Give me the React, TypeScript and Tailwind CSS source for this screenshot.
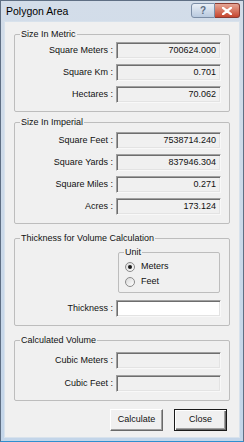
import type { ReactNode } from 'react';

const font = { fontFamily: '"Liberation Sans", Arial, sans-serif' };

function Field({ label, value, white }: { label: string; value?: string; white?: boolean }) {
  return (
    <div className="flex items-center h-[17px]">
      <span className="w-[101px] text-right pr-[3px]">{label}</span>
      <div
        className={
          (white ? 'bg-white' : 'bg-[#f0f0f0]') +
          ' w-[105px] h-[17px] border border-t-[#a0a0a0] border-l-[#a0a0a0] border-r-[#f8f8f8] border-b-[#f8f8f8] shadow-[inset_1px_1px_0_#6e6e6e,inset_-1px_-1px_0_#e3e3e3] flex items-center justify-end pr-[4px]'
        }
      >
        {value}
      </div>
    </div>
  );
}

function Group({ title, className, children }: { title: string; className?: string; children: ReactNode }) {
  return (
    <fieldset className={'border border-[#bdbdbd] rounded-[2px] mx-[9px] px-0 ' + (className ?? '')}>
      <legend className="ml-[5px] px-[1px] leading-[13px]">{title}</legend>
      {children}
    </fieldset>
  );
}

function Radio({ label, checked }: { label: string; checked?: boolean }) {
  return (
    <div className="flex items-center h-[15px] pl-[6px]">
      <div className="w-[10px] h-[10px] rounded-full border border-[#8a8a8a] bg-gradient-to-br from-[#d8d8d8] to-white flex items-center justify-center">
        {checked && <div className="w-[4px] h-[4px] rounded-full bg-[#1a1a1a]" />}
      </div>
      <span className="ml-[6px]">{label}</span>
    </div>
  );
}

function Btn({ label, isDefault }: { label: string; isDefault?: boolean }) {
  return (
    <button
      className={
        'w-[53px] h-[22px] bg-[#f0f0f0] flex items-center justify-center ' +
        (isDefault
          ? 'border border-[#1a1a1a] shadow-[inset_1px_1px_0_#ffffff,inset_-1px_-1px_0_#696969,inset_-2px_-2px_0_#a0a0a0]'
          : 'border border-t-white border-l-white border-r-[#696969] border-b-[#696969] shadow-[inset_-1px_-1px_0_#a0a0a0]')
      }
    >
      {label}
    </button>
  );
}

export default function App() {
  return (
    <div style={font} className="w-[244px] h-[442px] text-[9px] text-[#111]">
      <div className="w-full h-full flex flex-col border border-[#5f6f84] bg-gradient-to-b from-[#d3dde9] to-[#c3d5e9] border-b-[#2f8fd0]">
        <div className="h-[20px] flex items-center pl-[5px] pr-[3px] shrink-0">
          <span className="text-[10.5px] text-black flex-1 pt-[1px]">Polygon Area</span>
          <div className="flex items-start self-start mt-[2px]">
            <div className="w-[24px] h-[15px] rounded-l-[3px] border border-[#7c8ea6] bg-gradient-to-b from-[#e9eff6] to-[#b9cadf] flex items-center justify-center text-[10px] font-bold text-[#5d6d82]">
              ?
            </div>
            <div className="w-[25px] h-[15px] rounded-r-[3px] border border-[#8a3b32] border-l-0 bg-gradient-to-b from-[#e5a595] to-[#c5452f] flex items-center justify-center">
              <svg width="10" height="8" viewBox="0 0 10 8">
                <path d="M1 0.8 L9 7.2 M9 0.8 L1 7.2" stroke="#ffffff" strokeWidth="2.2" strokeLinecap="round" />
              </svg>
            </div>
          </div>
        </div>
        <div className="flex-1 mx-[3px] mb-[3px] bg-[#f0f0f0] border border-[#d8e2ec] flex flex-col pt-[6px]">
          <Group title="Size In Metric" className="pt-[1px] pb-[8px]">
            <div className="flex flex-col gap-[5px]">
              <Field label="Square Meters :" value="700624.000" />
              <Field label="Square Km :" value="0.701" />
              <Field label="Hectares :" value="70.062" />
            </div>
          </Group>
          <Group title="Size In Imperial" className="mt-[4px] pt-[3px] pb-[8px]">
            <div className="flex flex-col gap-[5px]">
              <Field label="Square Feet :" value="7538714.240" />
              <Field label="Square Yards :" value="837946.304" />
              <Field label="Square Miles :" value="0.271" />
              <Field label="Acres :" value="173.124" />
            </div>
          </Group>
          <Group title="Thickness for Volume Calculation" className="mt-[8px] pt-[1px] pb-[8px]">
            <fieldset className="border border-[#bdbdbd] rounded-[2px] ml-[103px] w-[102px] pb-[3px]">
              <legend className="ml-[5px] px-[1px] leading-[13px]">Unit</legend>
              <Radio label="Meters" checked />
              <Radio label="Feet" />
            </fieldset>
            <div className="mt-[7px]">
              <Field label="Thickness :" white />
            </div>
          </Group>
          <Group title="Calculated Volume" className="mt-[8px] pt-[5px] pb-[8px]">
            <div className="flex flex-col gap-[6px]">
              <Field label="Cubic Meters :" />
              <Field label="Cubic Feet :" />
            </div>
          </Group>
          <div className="flex justify-end gap-[11px] mt-[8px] pr-[12px]">
            <Btn label="Calculate" />
            <Btn label="Close" isDefault />
          </div>
        </div>
      </div>
    </div>
  );
}
